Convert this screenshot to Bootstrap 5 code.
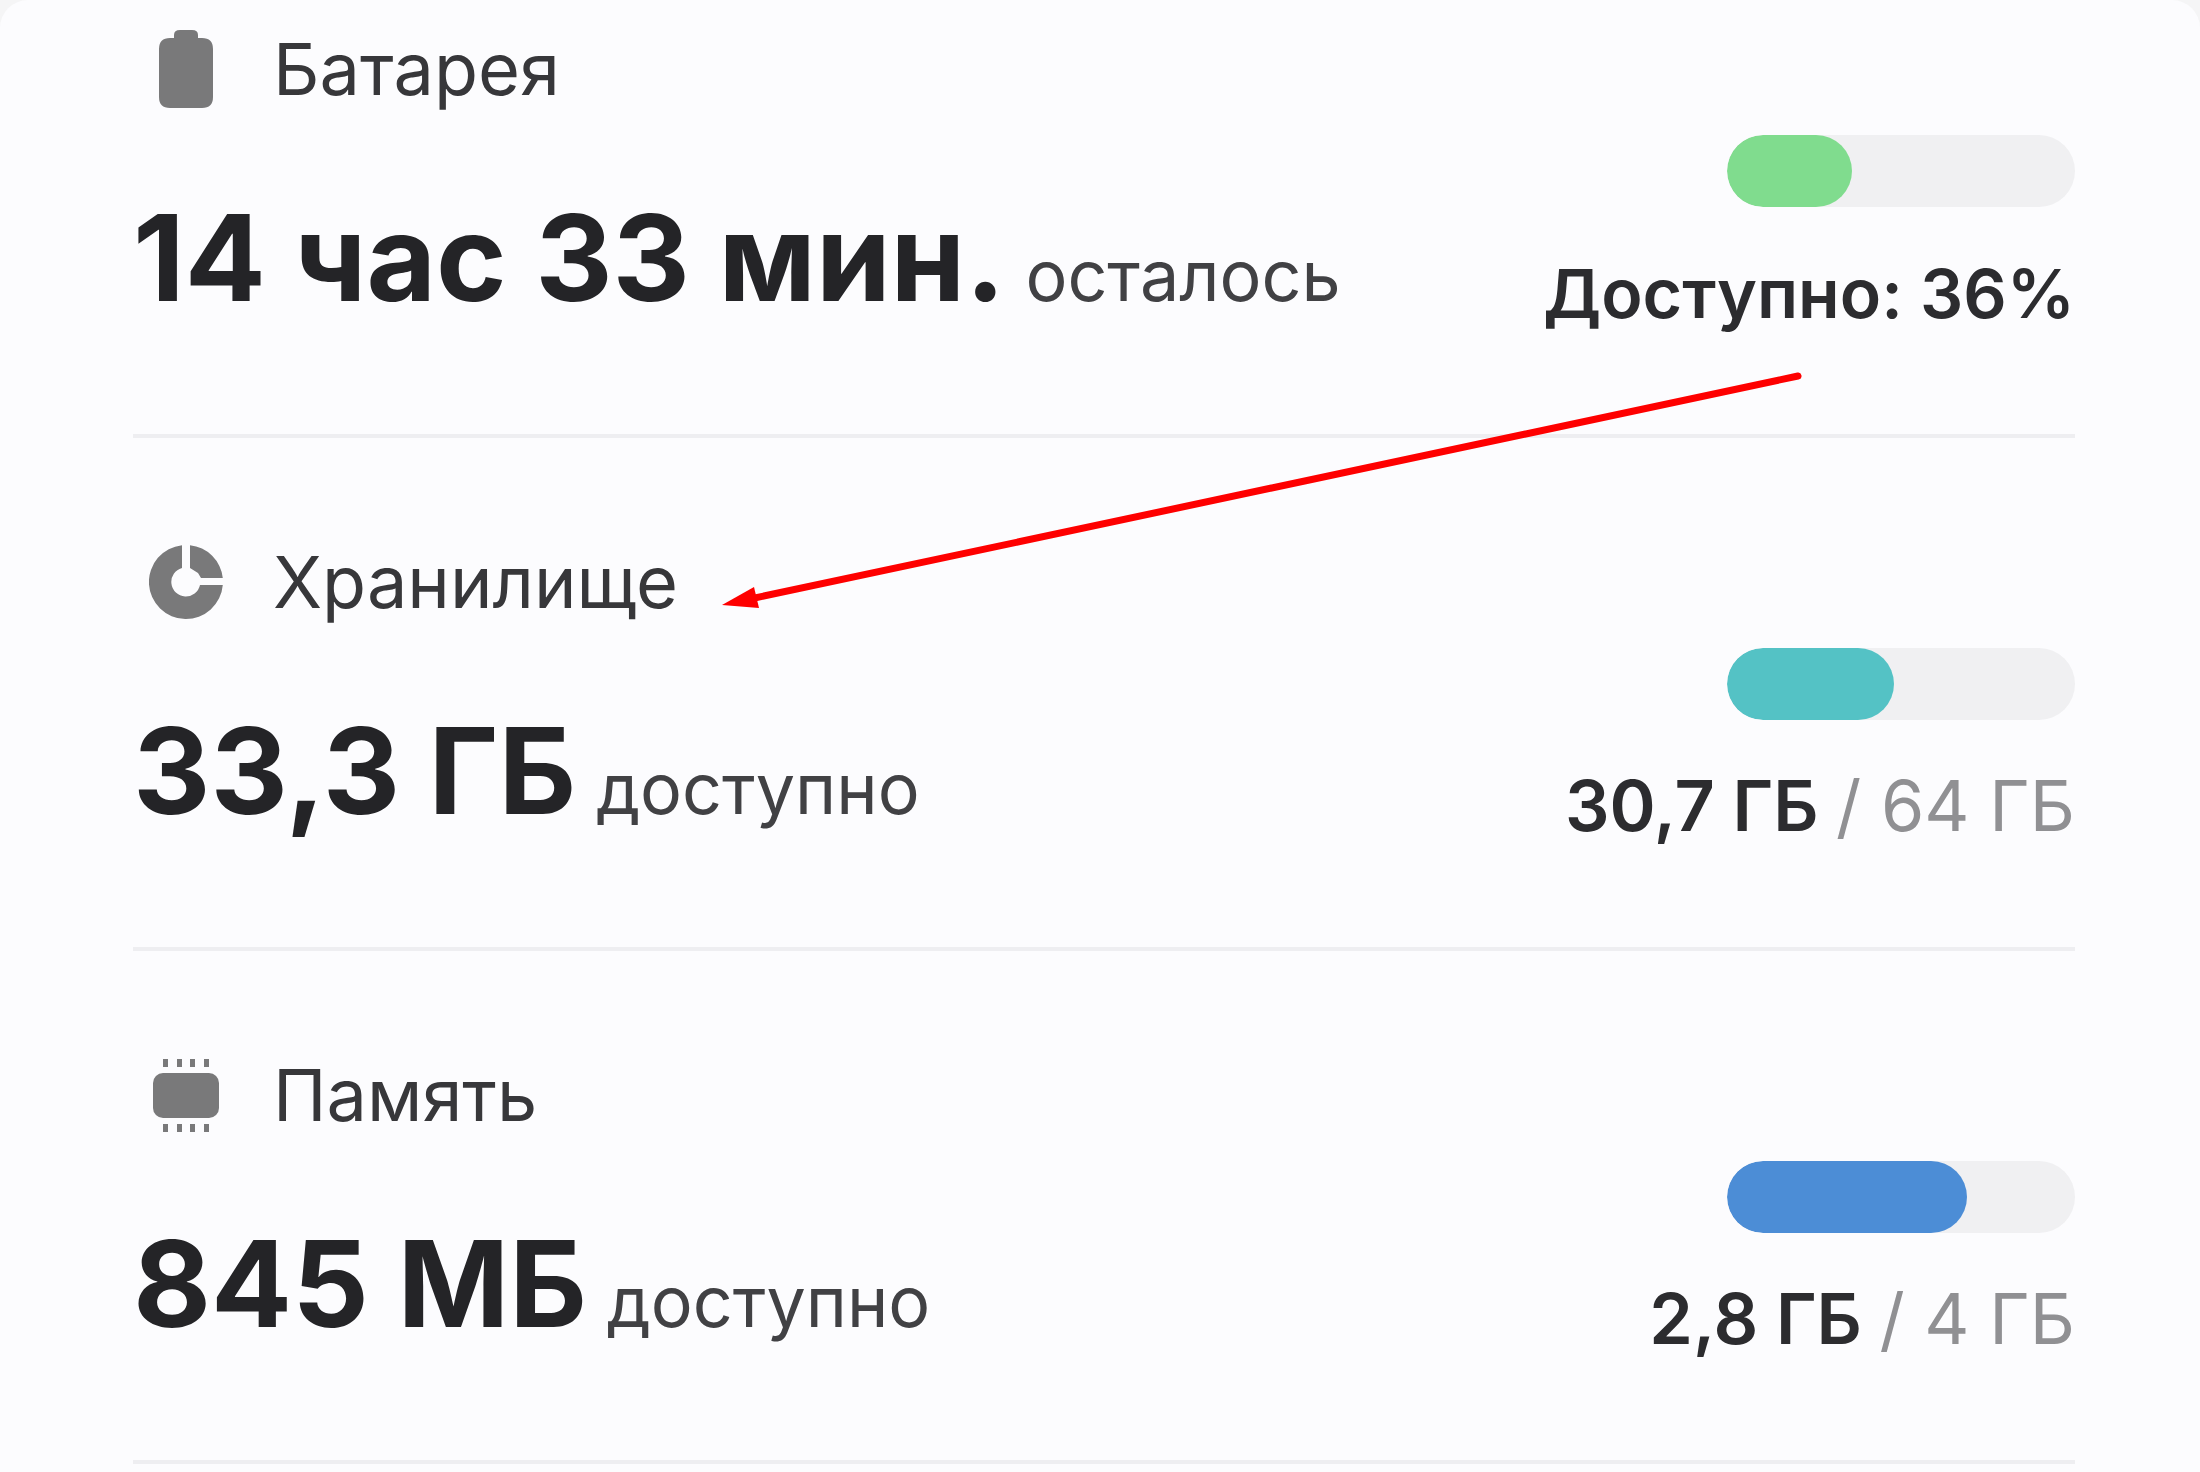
<!DOCTYPE html>
<html lang="ru">
<head>
<meta charset="utf-8">
<meta name="viewport" content="width=device-width, initial-scale=1">
<title>Состояние устройства</title>
<link rel="stylesheet" href="https://cdn.jsdelivr.net/npm/bootstrap@5.3.0/dist/css/bootstrap.min.css">
<style>
  body { background: #f5f5f6; font-family: Inter, Roboto, sans-serif; color: #242427; overflow: hidden; }
  .panel { background: #fcfcfe; border-radius: 28px 28px 0 0; padding: 0 125px 0 133px; min-height: 100vh; }
  .stat { height: 513px; border-bottom: 4px solid #eeeef1; }
  .stat:first-child { height: 438px; }
  .stat-body { padding-bottom: 97px; }
  .stat-main { padding-bottom: 16px; }
  .stat-head { margin-bottom: 76px; }
  .stat-icon { width: 74px; height: 80px; margin: 0 50px 0 16px; fill: #79797a; }
  .stat-title { font-size: 72px; line-height: 100px; color: #37373a; font-weight: 400; }
  .stat-line { gap: 20px; }
  .stat-value { font-size: 120px; line-height: 126px; font-weight: 700; }
  .stat-note { font-size: 70px; line-height: 84px; color: #414144; }
  .stat-side { font-size: 70px; line-height: 84px; font-weight: 600; color: #2c2c2f; padding-bottom: 2px; }
  .stat-side .total { color: #909093; font-weight: 400; }
  .stat-side .percent { font-size: 68px; }
  .meter { width: 348px; height: 72px; border-radius: 36px; background: #f0f0f2; margin-bottom: 44px; }
  .meter .progress-bar { border-radius: 36px; }
  .fill-battery { background: #80dc8e; }
  .fill-storage { background: #54c2c5; }
  .fill-memory { background: #4c8dd6; }
  .pointer { width: 100%; pointer-events: none; }
</style>
<script src="https://cdn.jsdelivr.net/npm/bootstrap@5.3.0/dist/js/bootstrap.bundle.min.js"></script>
</head>
<body>
<main class="panel position-relative">
  <section class="stat d-flex flex-column justify-content-end">
    <div class="stat-body d-flex justify-content-between align-items-end">
      <div class="stat-main">
        <div class="stat-head d-flex align-items-center">
          <svg class="stat-icon" viewBox="0 0 74 80" aria-hidden="true"><path d="M25 9V6q0-5 6-5h12q6 0 6 5v3h4q11 0 11 11v48q0 11-11 11H21q-11 0-11-11V20Q10 9 21 9z"/></svg>
          <h2 class="stat-title mb-0">Батарея</h2>
        </div>
        <div class="stat-line d-flex align-items-baseline"><span class="stat-value">14 час 33 мин.</span><span class="stat-note">осталось</span></div>
      </div>
      <div class="stat-side d-flex flex-column align-items-end">
        <div class="progress meter" role="progressbar" aria-label="Батарея" aria-valuenow="36" aria-valuemin="0" aria-valuemax="100"><div class="progress-bar fill-battery" style="width:36%"></div></div>
        <div class="percent">Доступно: 36%</div>
      </div>
    </div>
  </section>
  <section class="stat d-flex flex-column justify-content-end">
    <div class="stat-body d-flex justify-content-between align-items-end">
      <div class="stat-main">
        <div class="stat-head d-flex align-items-center">
          <svg class="stat-icon" viewBox="0 0 74 80" aria-hidden="true"><path d="M33 3.200A37 37 0 1 0 73.800 43H51A14.500 14.500 0 1 1 33 26z"/><path d="M41 3.200A37 37 0 0 1 73.800 36H52L49 31 41 26z"/></svg>
          <h2 class="stat-title mb-0">Хранилище</h2>
        </div>
        <div class="stat-line d-flex align-items-baseline"><span class="stat-value">33,3 ГБ</span><span class="stat-note">доступно</span></div>
      </div>
      <div class="stat-side d-flex flex-column align-items-end">
        <div class="progress meter" role="progressbar" aria-label="Хранилище" aria-valuenow="48" aria-valuemin="0" aria-valuemax="100"><div class="progress-bar fill-storage" style="width:48%"></div></div>
        <div>30,7 ГБ <span class="total">/ 64 ГБ</span></div>
      </div>
    </div>
  </section>
  <section class="stat d-flex flex-column justify-content-end">
    <div class="stat-body d-flex justify-content-between align-items-end">
      <div class="stat-main">
        <div class="stat-head d-flex align-items-center">
          <svg class="stat-icon" viewBox="0 0 74 80" aria-hidden="true"><rect x="4" y="18" width="66" height="45" rx="10"/><path d="M14 4h5v8h-5zM28 4h5v8h-5zM41 4h5v8h-5zM55 4h5v8h-5zM14 69h5v8h-5zM28 69h5v8h-5zM41 69h5v8h-5zM55 69h5v8h-5z"/></svg>
          <h2 class="stat-title mb-0">Память</h2>
        </div>
        <div class="stat-line d-flex align-items-baseline"><span class="stat-value">845 МБ</span><span class="stat-note">доступно</span></div>
      </div>
      <div class="stat-side d-flex flex-column align-items-end">
        <div class="progress meter" role="progressbar" aria-label="Память" aria-valuenow="69" aria-valuemin="0" aria-valuemax="100"><div class="progress-bar fill-memory" style="width:69%"></div></div>
        <div>2,8 ГБ <span class="total">/ 4 ГБ</span></div>
      </div>
    </div>
  </section>
  <svg class="pointer position-absolute top-0 start-0" viewBox="0 0 2200 1472" aria-hidden="true"><path d="M1798 376L750 599" stroke="#fe0000" stroke-width="7" stroke-linecap="round"/><path d="M722 605L754 587L759 608z" fill="#fe0000"/></svg>
</main>
</body>
</html>
